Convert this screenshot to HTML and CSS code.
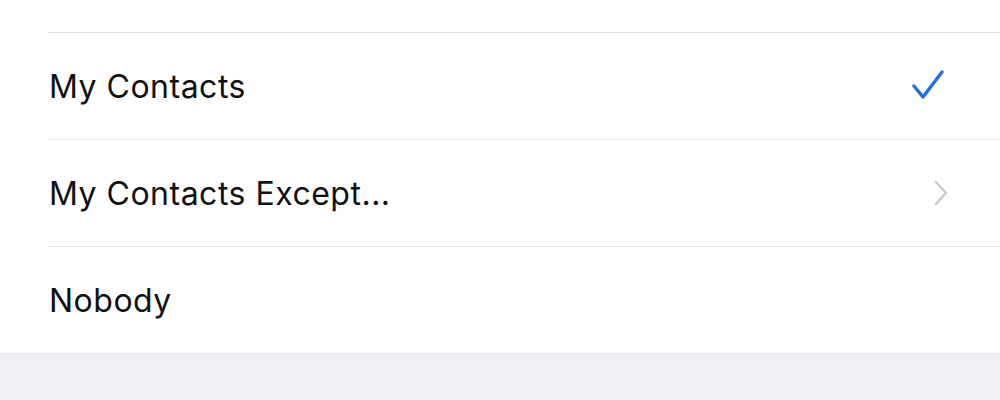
FILE: index.html
```html
<!DOCTYPE html>
<html>
<head>
    <meta charset="UTF-8">
    <meta name="viewport" content="width=device-width, initial-scale=1.0">
    <title>Privacy</title>
    <link rel="stylesheet" href="styles.css">
</head>
<body>
    <div class="list">
        <div class="row">
            <div class="cell">
                <span class="label">Everyone</span>
                <span class="accessory"></span>
            </div>
        </div>
        <div class="row">
            <div class="cell">
                <span class="label">My Contacts</span>
                <span class="accessory">
                    <svg class="check" width="32" height="30" viewBox="0 0 32 30">
                        <polyline points="2,16 11,27 30,2" />
                    </svg>
                </span>
            </div>
        </div>
        <div class="row">
            <div class="cell">
                <span class="label">My Contacts Except...</span>
                <span class="accessory">
                    <svg class="chevron" width="14" height="26" viewBox="0 0 14 26">
                        <polyline points="2,2 12,13 2,24" />
                    </svg>
                </span>
            </div>
        </div>
        <div class="row">
            <div class="cell">
                <span class="label">Nobody</span>
                <span class="accessory"></span>
            </div>
        </div>
    </div>
</body>
</html>
```

FILE: styles.css
```css
body {
    margin: 0;
    padding: 0;
    background-color: #efeff4;
    font-family: Inter, "Noto Sans", sans-serif;
    overflow: hidden;
}
.list {
    margin-top: -74px;
    background-color: #fff;
    border-bottom: 1px solid #e6e6e8;
}
.row {
    padding-left: 48px;
}
.cell {
    height: 106px;
    display: flex;
    align-items: center;
    justify-content: space-between;
    padding-right: 52px;
    border-bottom: 1px solid #e4e4e6;
}
.row:last-child .cell {
    border-bottom: none;
}
.label {
    font-size: 32px;
    letter-spacing: 0.5px;
    color: #111;
    padding-left: 1px;
}
.accessory {
    width: 40px;
    display: flex;
    justify-content: flex-end;
    align-items: center;
}
.check {
    margin-right: 4px;
    margin-top: -2px;
}
.check polyline {
    fill: none;
    stroke: #1f6fdc;
    stroke-width: 3.4;
    stroke-linecap: round;
    stroke-linejoin: round;
}
.chevron polyline {
    fill: none;
    stroke: #c9c9ce;
    stroke-width: 2.4;
    stroke-linecap: round;
    stroke-linejoin: round;
}
```
